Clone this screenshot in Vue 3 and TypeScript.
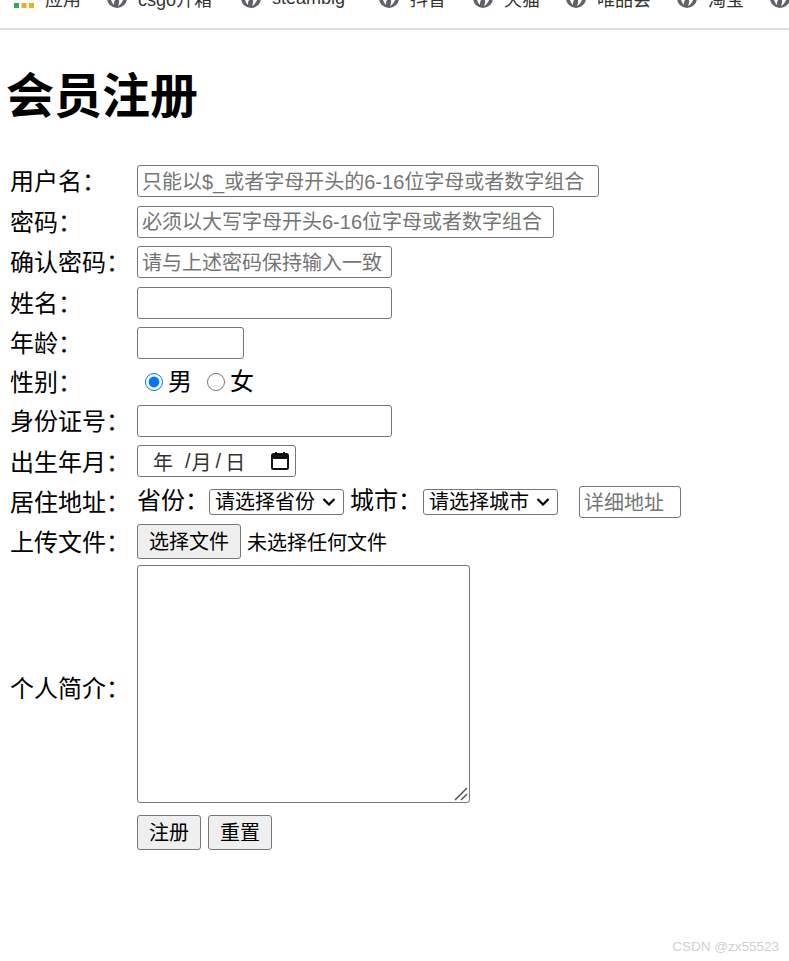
<script setup lang="ts">
const bookmarks = [
  { name: 'csgo开箱', width: 134 },
  { name: 'steambig', width: 138 },
  { name: '抖音', width: 94 },
  { name: '天猫', width: 93 },
  { name: '唯品会', width: 111 },
  { name: '淘宝', width: 93 },
  { name: '', width: 24 }
]
</script>

<template>
  <div class="bar">
    <div class="bar-inner">
      <div class="mark apps">
        <svg class="apps-icon" width="20" height="20" viewBox="0 0 20 20">
          <rect x="0" y="0" width="5" height="5" fill="#ea4335" />
          <rect x="7.5" y="0" width="5" height="5" fill="#ea4335" />
          <rect x="15" y="0" width="5" height="5" fill="#4285f4" />
          <rect x="0" y="15" width="5" height="5" fill="#34a853" />
          <rect x="7.500" y="15" width="5" height="5" fill="#f9a825" />
          <rect x="15" y="15" width="5" height="5" fill="#f9a825" />
        </svg>
        <span>应用</span>
      </div>
      <div v-for="b in bookmarks" :key="b.name" class="mark" :style="{ width: b.width + 'px' }">
        <svg class="globe" width="20" height="20" viewBox="0 0 20 20">
          <circle cx="10" cy="10" r="10" fill="#5f6368" />
          <path d="M11 10c3 0 5-1 6-3 0 4-2 9-6 11 1-3 2-5 0-8zM8 12c-2-1-3-3-4-6-1 4 0 8 3 11 0-2 0-3 1-5z" fill="#fff" />
        </svg>
        <span v-if="b.name">{{ b.name }}</span>
      </div>
    </div>
  </div>

  <div class="page">
    <h1>会员注册</h1>
    <form @submit.prevent>
      <table>
        <tbody>
          <tr>
            <td class="lab">用户名：</td>
            <td><input class="w-user" type="text" placeholder="只能以$_或者字母开头的6-16位字母或者数字组合" /></td>
          </tr>
          <tr>
            <td class="lab">密码：</td>
            <td><input class="w-pass" type="password" placeholder="必须以大写字母开头6-16位字母或者数字组合" /></td>
          </tr>
          <tr>
            <td class="lab">确认密码：</td>
            <td><input class="w-std" type="password" placeholder="请与上述密码保持输入一致" /></td>
          </tr>
          <tr>
            <td class="lab">姓名：</td>
            <td><input class="w-std" type="text" /></td>
          </tr>
          <tr>
            <td class="lab">年龄：</td>
            <td><input class="w-age" type="number" /></td>
          </tr>
          <tr class="short">
            <td class="lab">性别：</td>
            <td>
              <div class="radios">
                <input id="male" type="radio" name="sex" checked />
                <label for="male">男</label>
                <input id="female" class="second" type="radio" name="sex" />
                <label for="female">女</label>
              </div>
            </td>
          </tr>
          <tr>
            <td class="lab">身份证号：</td>
            <td><input class="w-std" type="text" /></td>
          </tr>
          <tr>
            <td class="lab">出生年月：</td>
            <td>
              <div class="date">
                <span class="d-y">年</span>
                <span class="d-s1">/</span>
                <span>月</span>
                <span class="d-s2">/</span>
                <span>日</span>
                <svg class="cal" width="18" height="20" viewBox="0 0 18 20">
                  <path d="M2.500 3h13A1.500 1.500 0 0 1 17 4.500v12a1.500 1.500 0 0 1-1.500 1.500h-13A1.500 1.500 0 0 1 1 16.500v-12A1.500 1.500 0 0 1 2.500 3z" fill="none" stroke="#111" stroke-width="2" />
                  <rect x="1" y="3" width="16" height="5" fill="#111" />
                  <rect x="4" y="1" width="2" height="3" fill="#111" />
                  <rect x="12" y="1" width="2" height="3" fill="#111" />
                </svg>
              </div>
            </td>
          </tr>
          <tr>
            <td class="lab">居住地址：</td>
            <td>
              <div class="addr">
                <span>省份：</span>
                <select><option>请选择省份</option></select>
                <span class="city">城市：</span>
                <select><option>请选择城市</option></select>
                <input class="w-addr" type="text" placeholder="详细地址" />
              </div>
            </td>
          </tr>
          <tr class="file-row">
            <td class="lab">上传文件：</td>
            <td>
              <div class="file">
                <button type="button" class="btn pick">选择文件</button>
                <span>未选择任何文件</span>
              </div>
            </td>
          </tr>
          <tr>
            <td class="lab bio">个人简介：</td>
            <td>
              <div class="area">
                <textarea></textarea>
                <svg class="grip" width="14" height="14" viewBox="0 0 14 14">
                  <path d="M1 13 13 1M7 13l6-6" fill="none" stroke="#555" stroke-width="1.500" />
                </svg>
              </div>
            </td>
          </tr>
          <tr>
            <td></td>
            <td>
              <div class="actions">
                <button type="submit" class="btn small">注册</button>
                <button type="reset" class="btn small">重置</button>
              </div>
            </td>
          </tr>
        </tbody>
      </table>
    </form>
  </div>
  <div class="watermark">CSDN @zx55523</div>
</template>

<style>
html, body {
  background: #fff;
}
</style>

<style scoped>
.bar {
  height: 28px;
  border-bottom: 2px solid #e0e0e0;
  overflow: hidden;
  font-family: "Liberation Sans", "Noto Sans CJK SC", sans-serif;
}
.bar-inner {
  display: flex;
  align-items: center;
  height: 20px;
  margin-top: -12px;
  padding-left: 14px;
  font-size: 18px;
  color: #333;
  white-space: nowrap;
}
.mark {
  display: flex;
  align-items: center;
  flex: none;
}
.apps {
  width: 93px;
  gap: 11px;
}
.globe {
  flex: none;
  margin-right: 11px;
}
.page {
  padding: 0 8px;
  font-family: "Liberation Sans", "Noto Sans CJK SC", sans-serif;
  color: #000;
}
h1 {
  margin: 0 0 0 -2px;
  padding-top: 34px;
  height: 101px;
  box-sizing: border-box;
  font-size: 48px;
  line-height: 66px;
}
table {
  border-collapse: separate;
  border-spacing: 2px 0;
  margin-top: 30px;
  font-size: 24px;
}
td {
  padding: 0;
  height: 40.5px;
  vertical-align: middle;
}
.short td {
  height: 37.5px;
}
.file-row td {
  height: 39.5px;
}
.lab {
  width: 124px;
  padding-top: 2px;
  box-sizing: border-box;
  line-height: 32px;
  white-space: nowrap;
}
.lab.bio {
  padding-top: 12px;
}
td + td {
  padding-left: 1px;
}
input:not([type="radio"]),
textarea,
select {
  box-sizing: border-box;
  border: 1px solid #767676;
  border-radius: 3px;
  background-color: #fff;
  font-family: "Liberation Sans", "Noto Sans CJK SC", sans-serif;
  font-size: 20px;
  display: block;
  margin: 0;
}
input:not([type="radio"]) {
  height: 32px;
  padding: 2px 4px 0;
}
input::placeholder {
  color: #757575;
  opacity: 1;
}
.w-user { width: 462px; }
.w-pass { width: 417px; }
.w-std { width: 255px; }
.w-age { width: 107px; }
.addr .w-addr { width: 102px; margin-left: 21px; }
.radios {
  display: flex;
  align-items: center;
  padding-left: 8px;
  line-height: 30px;
}
.radios input {
  width: 18px;
  height: 18px;
  margin: 0 5px 0 0;
}
.radios .second {
  margin-left: 15px;
}
.date {
  display: flex;
  align-items: center;
  box-sizing: border-box;
  width: 159px;
  height: 32px;
  margin-bottom: 1px;
  border: 1px solid #767676;
  border-radius: 3px;
  padding-left: 15px;
  font-size: 20px;
  color: #333;
}
.d-y { margin-right: 12px; }
.d-s1 { margin-right: 1px; }
.d-s2 { margin: 0 4px; }
.cal {
  margin-left: auto;
  margin-right: 6px;
}
.addr {
  display: flex;
  align-items: center;
  height: 32px;
  line-height: 26px;
  white-space: nowrap;
}
.addr span {
  position: relative;
  top: -1px;
}
select {
  appearance: none;
  width: 135px;
  height: 26px;
  padding: 0 0 0 5px;
  line-height: 24px;
  color: #000;
  background-image: url("data:image/svg+xml,%3Csvg xmlns='http://www.w3.org/2000/svg' width='14' height='8' viewBox='0 0 14 8'%3E%3Cpath d='M1.500 1 7 6.500 12.500 1' fill='none' stroke='%23000' stroke-width='2.200'/%3E%3C/svg%3E");
  background-repeat: no-repeat;
  background-position: right 7px center;
}
.city {
  margin: 0 1px 0 6px;
}
.file {
  display: flex;
  align-items: center;
  margin-bottom: 1px;
  font-size: 20px;
  gap: 6px;
}
.btn {
  box-sizing: border-box;
  height: 35px;
  border: 1px solid #767676;
  border-radius: 3px;
  background: #efefef;
  font-family: "Liberation Sans", "Noto Sans CJK SC", sans-serif;
  font-size: 20px;
  line-height: 1;
  color: #000;
  padding: 0;
}
.pick { width: 104px; }
.small { width: 64px; }
.area {
  position: relative;
  width: 333px;
}
textarea {
  width: 333px;
  height: 238px;
  margin: 3px 0 0;
  resize: none;
}
.grip {
  position: absolute;
  right: 2px;
  bottom: 2px;
  background: #fff;
}
.actions {
  display: flex;
  gap: 7px;
  padding-top: 12px;
}
.watermark {
  position: absolute;
  right: 10px;
  top: 939px;
  font-family: "Liberation Sans", sans-serif;
  font-size: 13.5px;
  color: #cfcfcf;
}
</style>
